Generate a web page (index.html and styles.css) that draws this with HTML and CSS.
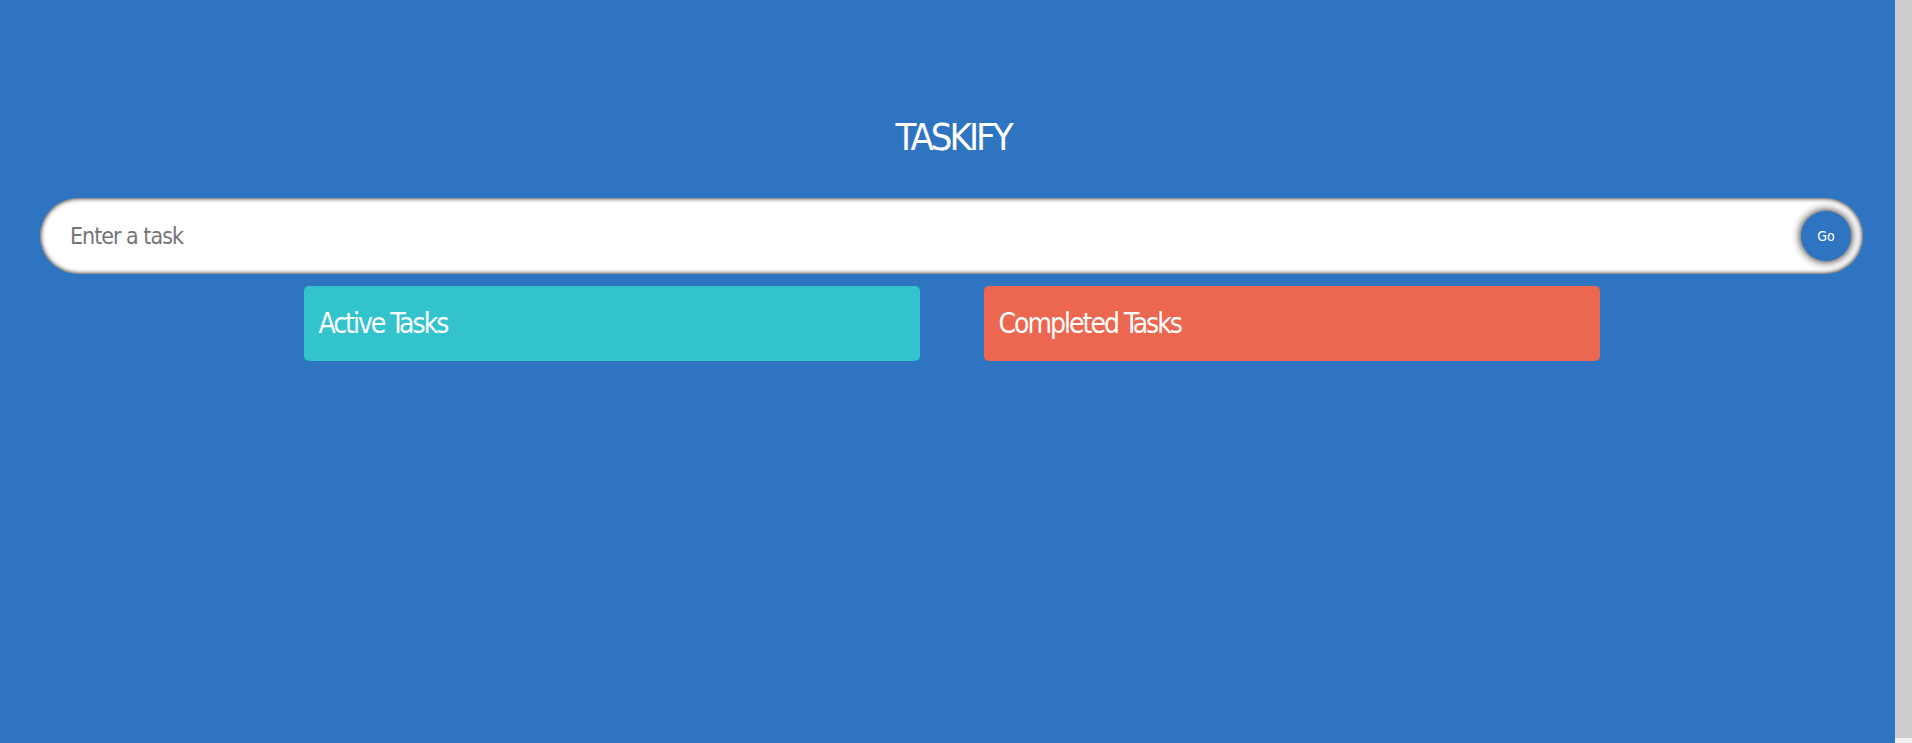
FILE: index.html
```html
<!DOCTYPE html>
<html lang="en">
<head>
<meta charset="utf-8">
<title>Taskify</title>
<link rel="stylesheet" href="styles.css">
</head>
<body>
<div class="app">
  <span class="heading">Taskify</span>
  <form class="input">
    <input class="input__box" type="text" placeholder="Enter a task">
    <button class="input__submit" type="button">Go</button>
  </form>
  <div class="container">
    <div class="todos">
      <span class="todos__heading">Active Tasks</span>
    </div>
    <div class="todos remove">
      <span class="todos__heading">Completed Tasks</span>
    </div>
  </div>
</div>
<div class="scrollbar" aria-hidden="true">
  <div class="scrollbar__thumb"></div>
  <div class="scrollbar__track"></div>
</div>
</body>
</html>
```

FILE: styles.css
```css
html, body {
  margin: 0;
  padding: 0;
}

body {
  display: flex;
  height: 743px;
  overflow: hidden;
  background-color: #2f74c0;
}

.app {
  box-sizing: border-box;
  flex: 1;
  min-width: 0;
  height: 743px;
  padding-left: 8px;
  display: flex;
  flex-direction: column;
  align-items: center;
  background-color: #2f74c0;
  font-family: "DejaVu Sans Condensed", "Liberation Sans", sans-serif;
}

.scrollbar {
  width: 17px;
  flex: 0 0 17px;
  display: flex;
  flex-direction: column;
  background: #f1f1f1;
}

.scrollbar__thumb {
  height: 738px;
  background: #cdcdcd;
}

.scrollbar__track {
  flex: 1;
  background: #f1f1f1;
}

.heading {
  text-transform: uppercase;
  font-size: 38px;
  line-height: 45px;
  letter-spacing: -3px;
  margin: 115px 0 38px;
  padding-left: 3px;
  color: #ffffff;
  text-align: center;
}

.input {
  display: flex;
  width: calc(100% - 64px);
  position: relative;
  align-items: center;
  margin: 0;
}

.input__box {
  box-sizing: border-box;
  width: 100%;
  height: 76px;
  border-radius: 50px;
  padding: 0 30px;
  font-size: 23px;
  letter-spacing: -1px;
  font-family: inherit;
  color: #333333;
  background: #ffffff;
  border: none;
  box-shadow: inset 0 0 5px #000000;
  outline: none;
}

.input__box::placeholder {
  color: #757575;
}

.input__submit {
  position: absolute;
  right: 0;
  width: 50px;
  height: 50px;
  margin: 12px;
  border-radius: 50px;
  border: none;
  font-size: 14px;
  font-family: inherit;
  background-color: #2f74c0;
  color: #ffffff;
  box-shadow: 0 0 10px #000000;
  padding: 0;
}

.container {
  display: flex;
  width: 1296px;
  margin-top: 12px;
  justify-content: space-between;
  align-items: flex-start;
}

.todos {
  box-sizing: border-box;
  display: flex;
  flex-direction: column;
  width: 616px;
  padding: 15px;
  border-radius: 5px;
  background-color: rgb(50, 195, 205);
}

.remove {
  background-color: rgb(235, 103, 80);
}

.todos__heading {
  font-size: 28px;
  letter-spacing: -2px;
  line-height: 45px;
  color: #ffffff;
}
```
